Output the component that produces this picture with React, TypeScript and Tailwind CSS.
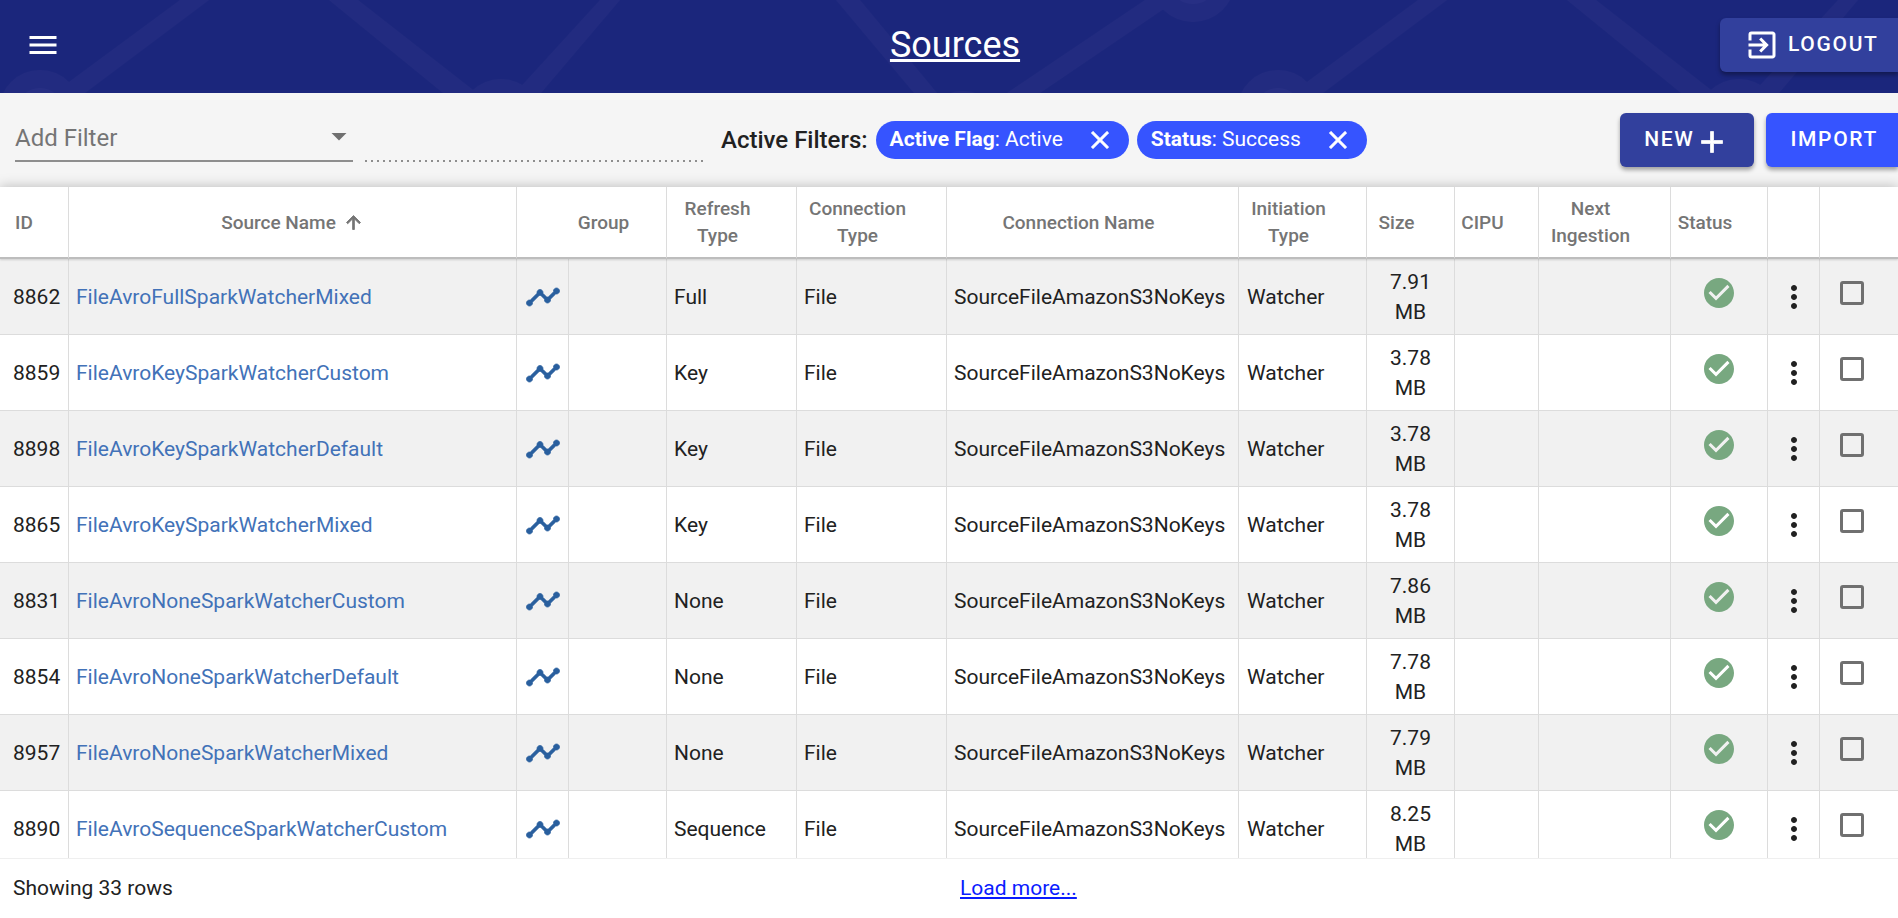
import {
  MdAdd,
  MdArrowDropDown,
  MdArrowUpward,
  MdCheckCircle,
  MdClose,
  MdExitToApp,
  MdMenu,
  MdMoreVert,
  MdTimeline,
} from "react-icons/md";

type Source = {
  id: number;
  name: string;
  refresh: string;
  size: string;
};

const sources: Source[] = [
  { id: 8862, name: "FileAvroFullSparkWatcherMixed", refresh: "Full", size: "7.91 MB" },
  { id: 8859, name: "FileAvroKeySparkWatcherCustom", refresh: "Key", size: "3.78 MB" },
  { id: 8898, name: "FileAvroKeySparkWatcherDefault", refresh: "Key", size: "3.78 MB" },
  { id: 8865, name: "FileAvroKeySparkWatcherMixed", refresh: "Key", size: "3.78 MB" },
  { id: 8831, name: "FileAvroNoneSparkWatcherCustom", refresh: "None", size: "7.86 MB" },
  { id: 8854, name: "FileAvroNoneSparkWatcherDefault", refresh: "None", size: "7.78 MB" },
  { id: 8957, name: "FileAvroNoneSparkWatcherMixed", refresh: "None", size: "7.79 MB" },
  { id: 8890, name: "FileAvroSequenceSparkWatcherCustom", refresh: "Sequence", size: "8.25 MB" },
];

const filters = [
  { label: "Active Flag", value: "Active" },
  { label: "Status", value: "Success" },
];

function HeaderPattern() {
  return (
    <svg className="absolute inset-0 h-full w-full" aria-hidden="true">
      <defs>
        <pattern id="nodes" width="1238" height="200" patternUnits="userSpaceOnUse">
          <g fill="#222b80">
            <path d="M54 93 180 0h29L85 93ZM329 0h29l119 93h-34ZM515 93 600 0h20l-79 93ZM836 0h24l77 93h-23ZM1007 93 1145 0h32l-137 93Z" />
            <circle cx="40" cy="111" r="41" />
            <circle cx="501" cy="121" r="42" />
            <circle cx="963" cy="133" r="42" />
            <circle cx="1193" cy="-20" r="42" />
          </g>
          <g fill="#272f84">
            <circle cx="40" cy="111" r="23" />
            <circle cx="1193" cy="-20" r="24" />
          </g>
        </pattern>
      </defs>
      <rect width="100%" height="100%" fill="url(#nodes)" />
    </svg>
  );
}

function Header() {
  return (
    <header className="relative h-[93px] shrink-0 bg-[#1b267c] text-white">
      <HeaderPattern />
      <div className="relative grid h-full grid-cols-[190px_1fr_178px] items-center pb-1">
        <button type="button" aria-label="Menu" className="ml-[25px] w-9">
          <MdMenu className="size-9" />
        </button>
        <h1 className="text-center text-[36px] leading-10">
          <a href="#sources" className="underline">
            Sources
          </a>
        </h1>
        <button
          type="button"
          className="flex h-[54px] items-center gap-2 rounded-l-md bg-[#32409d] pl-6 text-[21px] font-medium tracking-[0.08em] shadow-[0_3px_4px_rgba(0,0,0,0.35)]"
        >
          <MdExitToApp className="size-9" />
          LOGOUT
        </button>
      </div>
    </header>
  );
}

function Toolbar() {
  return (
    <section className="flex h-[94px] shrink-0 items-center bg-[#f5f5f5] pl-[15px]">
      <div className="relative w-[338px] shrink-0">
        <select
          aria-label="Add Filter"
          className="h-[44px] w-full appearance-none border-b-2 border-[#8e8e8e] pb-0.5 text-[24px] text-[#757575]"
        >
          <option>Add Filter</option>
        </select>
        <MdArrowDropDown className="pointer-events-none absolute top-0 -right-1 size-9 text-[#707070]" />
      </div>
      <input
        type="text"
        disabled
        aria-label="Filter value"
        className="ml-3 h-[44px] w-[338px] bg-[linear-gradient(90deg,#8e8e8e_2px,transparent_2px)] bg-[length:6px_2px] bg-bottom-left bg-repeat-x"
      />
      <div className="ml-[18px] flex items-center gap-2 whitespace-nowrap">
        <span className="text-[24px] font-medium">Active Filters:</span>
        {filters.map((filter) => (
          <span
            key={filter.label}
            className="flex h-[38px] items-center rounded-full bg-[#3654ff] pr-[14px] pl-[14px] text-[21px] text-white"
          >
            <b>{filter.label}</b>: {filter.value}
            <button type="button" aria-label={`Remove ${filter.label}`} className="ml-[22px]">
              <MdClose className="size-[30px] [&>path:last-child]:stroke-current [&>path:last-child]:stroke-[0.5]" />
            </button>
          </span>
        ))}
      </div>
      <div className="ml-auto flex gap-3 text-[21px] font-medium tracking-[0.08em] text-white">
        <button
          type="button"
          className="flex h-[54px] items-center rounded-md bg-[#32409d] px-6 shadow-[0_3px_4px_rgba(0,0,0,0.35)]"
        >
          NEW
          <MdAdd className="mt-1 size-9 [&>path:last-child]:stroke-current [&>path:last-child]:stroke-[0.5]" />
        </button>
        <button
          type="button"
          className="h-[54px] rounded-l-md bg-[#3654ff] pr-5 pl-6 shadow-[0_3px_4px_rgba(0,0,0,0.35)]"
        >
          IMPORT
        </button>
      </div>
    </section>
  );
}

function HeadCell({ label, sorted, className }: { label?: string; sorted?: boolean; className?: string }) {
  return (
    <th className={`border-r border-b-2 border-r-[#dcdcdc] border-b-[#bdbdbd] font-medium ${className ?? ""}`}>
      {label && (
        <span className="flex items-center justify-center gap-[7px]">
          <span>{label}</span>
          <MdArrowUpward
            className={
              sorted
                ? "size-[21px] shrink-0 [&>path:last-child]:stroke-current [&>path:last-child]:stroke-1"
                : "invisible size-[21px] shrink-0"
            }
          />
        </span>
      )}
    </th>
  );
}

function SourceRow({ source }: { source: Source }) {
  const cell = "border-r border-b border-[#dcdcdc]";
  return (
    <tr className="h-[76px] odd:bg-[#f1f1f1]">
      <td className={`${cell} pl-[13px]`}>{source.id}</td>
      <td className={`${cell} pl-[7px]`}>
        <a href={`#source-${source.id}`} className="text-[#4272b8]">
          {source.name}
        </a>
      </td>
      <td className={cell}>
        <a href={`#lineage-${source.id}`} aria-label="Lineage">
          <MdTimeline className="mx-auto size-9 text-[#295f9e] [&>path:last-child]:stroke-current [&>path:last-child]:stroke-[0.5]" />
        </a>
      </td>
      <td className={cell} />
      <td className={`${cell} pl-[7px]`}>{source.refresh}</td>
      <td className={`${cell} pl-[7px]`}>File</td>
      <td className={`${cell} pl-[7px]`}>SourceFileAmazonS3NoKeys</td>
      <td className={`${cell} pl-2`}>Watcher</td>
      <td className={`${cell} px-3 text-center`}>{source.size}</td>
      <td className={cell} />
      <td className={cell} />
      <td className={`${cell} pb-2`}>
        <MdCheckCircle className="mx-auto size-9 text-[#78a880]" />
      </td>
      <td className={cell}>
        <button type="button" aria-label="More actions" className="mx-auto block">
          <MdMoreVert className="size-9" />
        </button>
      </td>
      <td className="border-b border-[#dcdcdc] pb-2 pl-5">
        <input
          type="checkbox"
          aria-label={`Select ${source.name}`}
          className="block size-6 appearance-none rounded-[3px] border-3 border-[#707070]"
        />
      </td>
    </tr>
  );
}

function SourcesTable() {
  return (
    <section className="relative min-h-0 flex-1 shadow-[0_0_12px_rgba(0,0,0,0.25)]">
      <div className="h-full overflow-hidden bg-white">
        <table className="w-full table-fixed border-separate border-spacing-0 text-left text-[21px] leading-[30px]">
          <colgroup>
            <col className="w-[69px]" />
            <col />
            <col className="w-[52px]" />
            <col className="w-[98px]" />
            <col className="w-[130px]" />
            <col className="w-[150px]" />
            <col className="w-[292px]" />
            <col className="w-[128px]" />
            <col className="w-[88px]" />
            <col className="w-[84px]" />
            <col className="w-[132px]" />
            <col className="w-[97px]" />
            <col className="w-[52px]" />
            <col className="w-[78px]" />
          </colgroup>
          <thead className="relative z-10 bg-white text-center text-[19px] leading-[27px] text-[#757575] shadow-[0_1px_2px_rgba(0,0,0,0.15)]">
            <tr className="h-[72px]">
              <HeadCell label="ID" className="pr-1 pl-3" />
              <HeadCell label="Source Name" sorted />
              <HeadCell className="border-r-0" />
              <HeadCell label="Group" />
              <HeadCell label="Refresh Type" />
              <HeadCell label="Connection Type" />
              <HeadCell label="Connection Name" />
              <HeadCell label="Initiation Type" />
              <HeadCell label="Size" />
              <HeadCell label="CIPU" />
              <HeadCell label="Next Ingestion" />
              <HeadCell label="Status" />
              <HeadCell />
              <HeadCell className="border-r-0" />
            </tr>
          </thead>
          <tbody>
            {sources.map((source) => (
              <SourceRow key={source.id} source={source} />
            ))}
          </tbody>
        </table>
      </div>
    </section>
  );
}

export default function App() {
  return (
    <main className="flex h-screen flex-col overflow-hidden bg-white font-[Roboto,sans-serif] text-[#212121]">
      <Header />
      <Toolbar />
      <SourcesTable />
      <footer className="relative flex h-[60px] shrink-0 items-center border-t border-[#efefef] bg-white pl-[13px] text-[21px]">
        <span>Showing 33 rows</span>
        <div className="flex-1 pr-[34px] text-center">
          <a href="#more" className="text-[#0a1cff] underline">
            Load more...
          </a>
        </div>
      </footer>
    </main>
  );
}
